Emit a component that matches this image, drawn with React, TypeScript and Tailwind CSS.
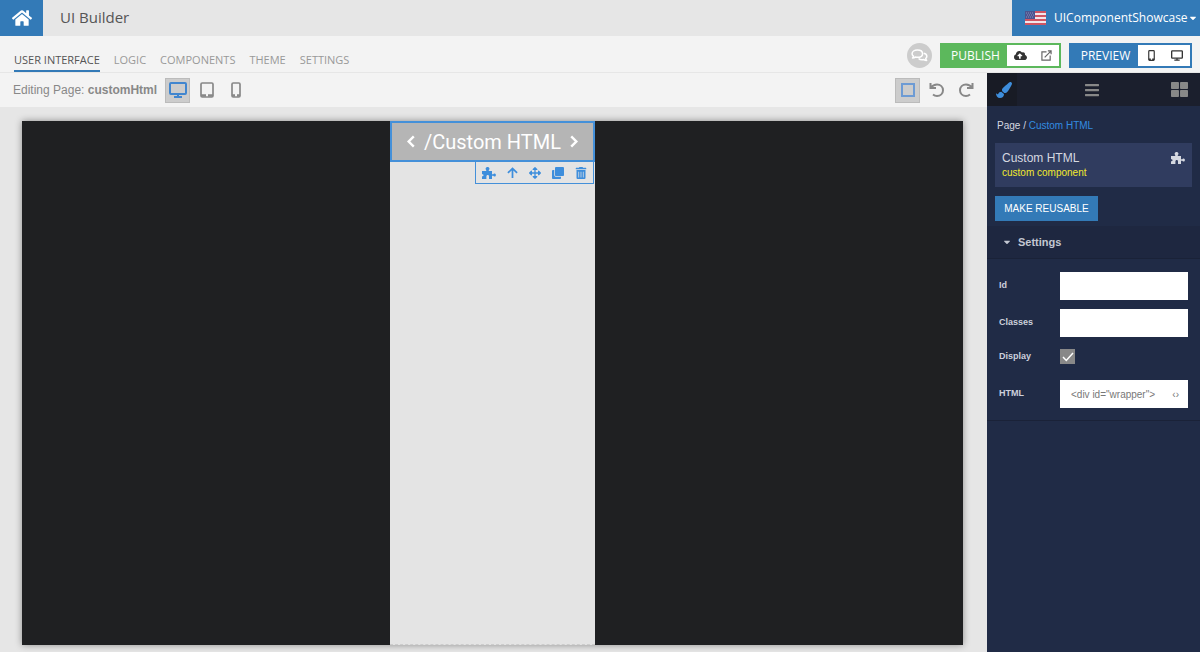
import { useState } from "react";
import type { ReactNode } from "react";
import {
  FaArrowsAlt,
  FaBars,
  FaCaretDown,
  FaClone,
  FaCloudUploadAlt,
  FaHome,
  FaPaintBrush,
  FaThLarge,
  FaTrashAlt,
} from "react-icons/fa";

const tabs = ["USER INTERFACE", "LOGIC", "COMPONENTS", "THEME", "SETTINGS"];

function MonitorIcon({ className }: { className: string }) {
  return (
    <svg viewBox="0 0 18 16" className={className} fill="none" stroke="currentColor" strokeWidth="2">
      <rect x="1" y="1" width="16" height="11" rx="1" />
      <path d="M9 12v3M5 15h8" />
    </svg>
  );
}

function TabletIcon({ className }: { className: string }) {
  return (
    <svg viewBox="0 0 14 16" className={className} fill="none" stroke="currentColor" strokeWidth="1.7">
      <rect x="1" y="1" width="12" height="14" rx="1.2" />
      <path d="M1 13.5h5M8 13.5h5" strokeWidth="2.6" />
    </svg>
  );
}

function PhoneIcon({ className }: { className: string }) {
  return (
    <svg viewBox="0 0 10 16" className={className} fill="none" stroke="currentColor" strokeWidth="1.7">
      <rect x="1" y="1" width="8" height="14" rx="1.2" />
      <path d="M1 13.5h3M6 13.5h3" strokeWidth="2.4" />
    </svg>
  );
}

function PuzzleIcon({ className }: { className: string }) {
  return (
    <svg viewBox="0 0 14 12" className={className} fill="currentColor">
      <path d="M0 4h4.200V2.900C3.400 2.400 3.400.9 4.300.4c.7-.5 1.900-.5 2.500 0 .9.600.9 1.900 0 2.500V4H10v3.300h1.300c.2-.7.8-1 1.400-.9 1.600.1 1.600 3 0 3.100-.6.1-1.200-.2-1.400-.8H10V12H7V9.600c0-.9-.4-1.500-1.200-1.500-.9 0-1.400.6-1.400 1.500V12H0V9.200c1 .2 1.500-.3 1.500-1S1 7 0 7.200z" />
    </svg>
  );
}

function UndoIcon({ className }: { className: string }) {
  return (
    <svg viewBox="0 0 16 16" className={className} fill="none" stroke="currentColor" strokeWidth="2">
      <path d="M1.500 1v5H7M2 5.700C3.500 3.400 5.700 2.500 8 2.500c3.500 0 6 2.500 6 5.700 0 3.300-2.600 5.800-6 5.800-1.500 0-2.900-.5-4-1.400" />
    </svg>
  );
}

function ArrowUpIcon({ className }: { className: string }) {
  return (
    <svg viewBox="0 0 12 12" className={className} fill="none" stroke="currentColor" strokeWidth="1.9">
      <path d="M6 12V2M1 6.500 6 1.500l5 5" />
    </svg>
  );
}

function ChevronIcon({ className }: { className: string }) {
  return (
    <svg viewBox="0 0 10 14" className={className} fill="none" stroke="currentColor" strokeWidth="2.6">
      <path d="M8 1.500 2.500 7 8 12.500" />
    </svg>
  );
}

function ExternalIcon({ className }: { className: string }) {
  return (
    <svg viewBox="0 0 12 12" className={className} fill="none" stroke="currentColor" strokeWidth="1.3">
      <path d="M6 2H1v9h9V6M4 8l6.800-6.800M7.500 1H11v3.500" />
    </svg>
  );
}

function CommentsIcon({ className }: { className: string }) {
  return (
    <svg viewBox="0 0 18 14" className={className} fill="none" stroke="currentColor" strokeWidth="1.6" strokeLinejoin="round">
      <path d="M13.500 4.500c2 .4 3.400 1.700 3.400 3.400 0 .9-.5 1.700-1.200 2.300.1.900.5 1.500 1 2.200-1.300 0-2.200-.4-3-1-2.300.5-4.600 0-5.700-1.200" />
      <path d="M6.700 1C10 1 12.300 2.700 12.300 5S10 9 6.700 9c-.8 0-1.500-.1-2.200-.3-.9.700-1.800 1-3 1 .6-.6.9-1.300 1-2C1.500 7.100 1 6.100 1 5c0-2.300 2.400-4 5.700-4z" />
    </svg>
  );
}

function Flag() {
  const stripes = [0, 4, 8, 12];
  return (
    <svg viewBox="0 0 21 14" className="h-[14px] w-[21px] shrink-0">
      <rect width="21" height="14" fill="#f3e6ea" />
      {stripes.map((y) => (
        <rect key={y} y={y} width="21" height="2" fill="#cf5563" />
      ))}
      <rect width="10" height="8" fill="#4a5590" />
      <path d="M1 2h8M2 4h7M1 6h8" stroke="#a9aed0" strokeWidth=".7" strokeDasharray="1 1" />
    </svg>
  );
}

function Header() {
  return (
    <header className="flex h-9 bg-[#e6e6e6] font-['Open_Sans',sans-serif]">
      <a href="#home" aria-label="Home" className="flex w-[43px] items-center justify-center bg-[#337ab7] text-white">
        <FaHome className="size-5" />
      </a>
      <h1 className="flex-1 pl-[17px] text-[15px] leading-[34px] text-[#555]">UI Builder</h1>
      <button className="flex w-[188px] items-center bg-[#337ab7] pl-[13px] text-[12px] text-white">
        <Flag />
        <span className="ml-2">UIComponentShowcase</span>
        <FaCaretDown className="size-[10px] shrink-0" />
      </button>
    </header>
  );
}

function NavBar() {
  const [active, setActive] = useState(tabs[0]);
  return (
    <div className="flex h-[37px] items-end border-b border-[#e6e6e6] bg-[#f3f3f3] font-['Open_Sans',sans-serif]">
      <nav className="flex flex-1 gap-[14px] pl-[14px]">
        {tabs.map((tab) => (
          <button
            key={tab}
            onClick={() => setActive(tab)}
            className={`h-[23px] border-b-2 pt-[2px] text-[11px] ${tab === active ? "border-[#337ab7] text-[#555]" : "border-transparent text-[#999]"}`}
          >
            {tab}
          </button>
        ))}
      </nav>
      <div className="flex items-center pr-2 pb-1">
        <button aria-label="Comments" className="mr-2 flex size-[25px] items-center justify-center rounded-full bg-[#ccc] text-white">
          <CommentsIcon className="h-[13px] w-[17px]" />
        </button>
        <div className="mr-2 flex h-[25px] bg-[#5cb85c] p-[2px] text-[12px] text-white">
          <button className="w-[65px] pl-[2px]">PUBLISH</button>
          <button aria-label="Upload" className="flex w-[26px] items-center justify-center bg-white text-[#333]">
            <FaCloudUploadAlt className="size-[13px]" />
          </button>
          <button aria-label="Open" className="flex w-[26px] items-center justify-center bg-white text-[#666]">
            <ExternalIcon className="size-[11px]" />
          </button>
        </div>
        <div className="flex h-[25px] bg-[#337ab7] p-[2px] text-[12px] text-white">
          <button className="w-[67px] pl-[2px]">PREVIEW</button>
          <button aria-label="Preview on phone" className="flex w-[26px] items-center justify-center bg-white text-[#333]">
            <PhoneIcon className="h-[11px] w-[7px]" />
          </button>
          <button aria-label="Preview on desktop" className="flex w-[26px] items-center justify-center bg-white text-[#333]">
            <MonitorIcon className="h-[11px] w-3" />
          </button>
        </div>
      </div>
    </div>
  );
}

function ToolButton({ label, active, children }: { label: string; active?: boolean; children: ReactNode }) {
  return (
    <button
      aria-label={label}
      className={`flex size-[25px] items-center justify-center border ${active ? "border-[#bbb] bg-[#ccc] text-[#4186cf]" : "border-transparent text-[#888]"}`}
    >
      {children}
    </button>
  );
}

function Toolbar() {
  return (
    <div className="flex h-[34px] items-center bg-[#f3f3f3] pr-[9px] pl-[13px]">
      <p className="mr-2 text-[12px] text-[#888]">
        Editing Page: <b>customHtml</b>
      </p>
      <div className="flex flex-1 gap-1">
        <ToolButton label="Desktop" active><MonitorIcon className="h-4 w-[18px]" /></ToolButton>
        <ToolButton label="Tablet"><TabletIcon className="h-4 w-[14px]" /></ToolButton>
        <ToolButton label="Phone"><PhoneIcon className="h-4 w-[10px]" /></ToolButton>
      </div>
      <div className="flex gap-1">
        <ToolButton label="Outline" active><span className="size-[14px] border-2 border-[#6d9bd4]" /></ToolButton>
        <ToolButton label="Undo"><UndoIcon className="size-4" /></ToolButton>
        <ToolButton label="Redo"><UndoIcon className="size-4 -scale-x-100" /></ToolButton>
      </div>
    </div>
  );
}

function Canvas() {
  return (
    <main className="flex flex-1 bg-[#e6e6e6] pt-[14px] pr-6 pb-[7px] pl-[22px]">
      <div className="flex flex-1 justify-center bg-[#1f2022] shadow-[0_0_7px_rgba(0,0,0,0.4)]">
        <div className="flex w-[205px] flex-col items-end border-b border-dashed border-[#ccc] bg-[#e4e4e4]">
          <div className="flex h-[41px] w-full items-center justify-center gap-2 border-2 border-[#4490d9] bg-[#b5b5b5] font-[Roboto,sans-serif] text-[20px] text-white">
            <ChevronIcon className="h-[13px] w-[10px]" />
            <span>/Custom HTML</span>
            <ChevronIcon className="h-[13px] w-[10px] -scale-x-100" />
          </div>
          <div className="mr-px flex h-[22px] w-[119px] items-center justify-between border border-t-0 border-[#4490d9] px-[6px] text-[#3e8edc]">
            <button aria-label="Component"><PuzzleIcon className="h-3 w-[14px]" /></button>
            <button aria-label="Select parent"><ArrowUpIcon className="size-[11px]" /></button>
            <button aria-label="Move"><FaArrowsAlt className="size-3" /></button>
            <button aria-label="Duplicate"><FaClone className="size-3" /></button>
            <button aria-label="Delete"><FaTrashAlt className="size-3" /></button>
          </div>
        </div>
      </div>
    </main>
  );
}

function Field({ id, label, children }: { id: string; label: string; children: ReactNode }) {
  return (
    <div className="flex items-center">
      <label htmlFor={id} className="w-[61px] text-[9px] font-bold text-[#ccd0dc]">{label}</label>
      {children}
    </div>
  );
}

function Sidebar() {
  const [display, setDisplay] = useState(true);
  return (
    <aside className="w-[213px] bg-[#202b46] text-[#d5d8e0]">
      <div className="flex h-[33px] items-center bg-[#1b1f2d] pr-3 text-[#888]">
        <button aria-label="Style" className="flex h-full w-[30px] items-center justify-center bg-[#181b25] pl-1 text-[#3e8edc]">
          <FaPaintBrush className="size-4" />
        </button>
        <button aria-label="Layers" className="flex flex-1 justify-center pr-1">
          <FaBars className="size-4" />
        </button>
        <button aria-label="Blocks"><FaThLarge className="size-[17px]" /></button>
      </div>

      <div className="px-2 pt-[10px]">
        <p className="pl-[2px] text-[10px] leading-[19px]">
          Page / <a href="#custom-html" className="text-[#338be0]">Custom HTML</a>
        </p>
        <div className="mt-2 flex h-[44px] justify-between bg-[#303c5f] px-[7px] pt-[7px]">
          <div>
            <h2 className="text-[12px] leading-4">Custom HTML</h2>
            <p className="text-[10px] leading-[14px] text-[#f2ea2e]">custom component</p>
          </div>
          <PuzzleIcon className="mt-[2px] h-3 w-[14px]" />
        </div>
        <button className="mt-[9px] h-[25px] w-[103px] bg-[#337ab7] text-[10px] text-white">MAKE REUSABLE</button>
      </div>

      <button className="mt-[5px] flex h-[33px] w-full items-center border-b border-[#1a2238] bg-[#1e2740] pl-[15px] text-[11px] font-bold text-[#c3c7d2]">
        <FaCaretDown className="mr-[6px] size-[10px]" />
        Settings
      </button>
      <div className="flex flex-col border-b border-[#1a2238] pt-[13px] pb-3 pl-3">
        <Field id="field-id" label="Id"><input id="field-id" className="h-7 w-32 bg-white px-2 text-[10px] text-[#777]" /></Field>
        <div className="h-[9px]" />
        <Field id="field-classes" label="Classes"><input id="field-classes" className="h-7 w-32 bg-white px-2 text-[10px] text-[#777]" /></Field>
        <div className="flex h-[43px] items-center pb-1">
          <Field id="field-display" label="Display">
            <span className="grid size-[15px] place-items-center">
              <input
                id="field-display"
                type="checkbox"
                checked={display}
                onChange={() => setDisplay(!display)}
                className="col-start-1 row-start-1 size-[15px] appearance-none bg-[#888]"
              />
              {display && (
                <svg viewBox="0 0 12 12" className="pointer-events-none col-start-1 row-start-1 size-3" fill="none" stroke="white" strokeWidth="1.5">
                  <path d="M1 6 4.300 9.500 11 2" />
                </svg>
              )}
            </span>
          </Field>
        </div>
        <Field id="field-html" label="HTML">
          <div className="flex h-7 w-32 items-center bg-white pr-[9px] pl-[11px] text-[#777]">
            <input id="field-html" defaultValue={'<div id="wrapper">'} className="w-full min-w-0 text-[10px]" />
            <span className="text-[10px]">‹›</span>
          </div>
        </Field>
      </div>
    </aside>
  );
}

export default function App() {
  return (
    <div className="flex min-h-screen flex-col bg-[#e6e6e6] font-['Liberation_Sans',Arial,sans-serif]">
      <Header />
      <NavBar />
      <div className="flex flex-1">
        <div className="flex flex-1 flex-col">
          <Toolbar />
          <Canvas />
        </div>
        <Sidebar />
      </div>
    </div>
  );
}
